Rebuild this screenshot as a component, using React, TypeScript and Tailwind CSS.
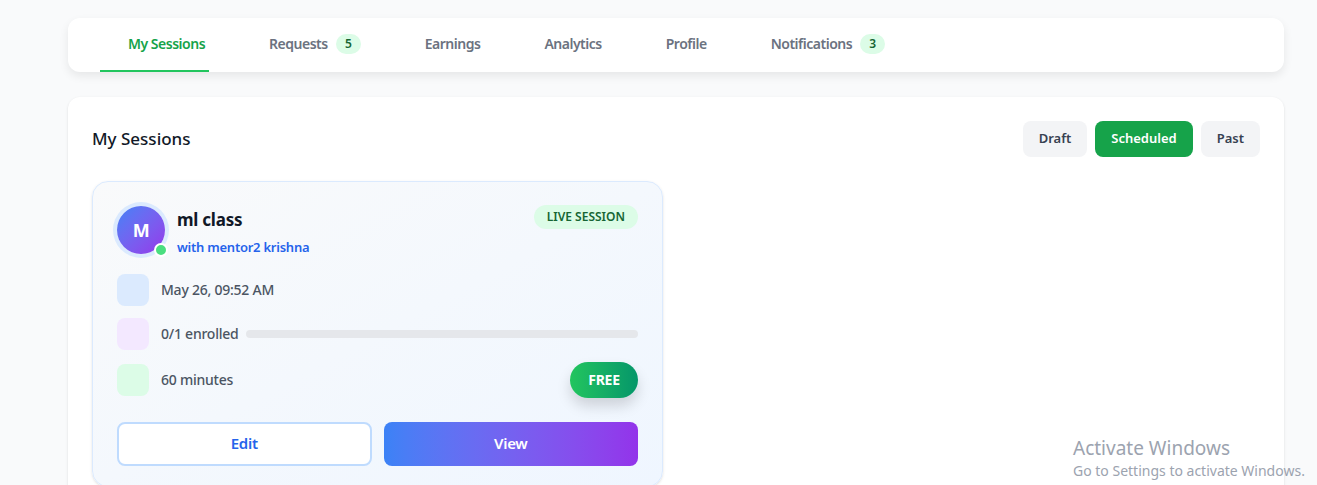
import React from 'react';

const tabs = [
    { label: 'My Sessions', active: true },
    { label: 'Requests', badge: 5 },
    { label: 'Earnings' },
    { label: 'Analytics' },
    { label: 'Profile' },
    { label: 'Notifications', badge: 3 },
];

function NavTabs() {
    return (
        <div className="flex h-[54px] items-center rounded-xl bg-white px-[60px] shadow-[0_4px_10px_rgba(0,0,0,0.08)]">
            <div className="flex h-full items-center gap-[64px]">
                {tabs.map((t) => (
                    <div key={t.label} className="relative flex h-full items-center gap-2 pb-[3px]">
                        <span className={`text-[14px] font-semibold tracking-[-0.035em] ${t.active ? 'text-[#16a34a]' : 'text-[#6b7280]'}`}>{t.label}</span>
                        {t.badge !== undefined && (
                            <span className="flex h-[20px] min-w-[25px] items-center justify-center rounded-full bg-[#dcfce7] px-2 text-[12px] font-semibold text-[#166534]">
                                {t.badge}
                            </span>
                        )}
                        {t.active && <span className="absolute bottom-0 left-[-28px] h-[2px] w-[109px] bg-[#22c55e]" />}
                    </div>
                ))}
            </div>
        </div>
    );
}

function InfoRow({ box, children, tall }: { box: string; children: React.ReactNode; tall?: boolean }) {
    return (
        <div className={`flex items-center gap-3 ${tall ? 'h-[36px]' : 'h-8'}`}>
            <div className={`h-8 w-8 shrink-0 rounded-lg ${box}`} />
            {children}
        </div>
    );
}

function SessionCard() {
    return (
        <div className="w-[571px] rounded-2xl border border-[#dbeafe] bg-gradient-to-br from-[#f9fafb] to-[#eff6ff] px-6 pt-6 pb-5 shadow-sm">
            <div className="flex items-start justify-between">
                <div className="flex items-start gap-3">
                    <div className="relative">
                        <div className="flex h-12 w-12 items-center justify-center rounded-full bg-gradient-to-br from-[#3b82f6] to-[#9333ea] text-[18px] font-bold text-white ring-4 ring-[#dbeafe]">
                            M
                        </div>
                        <span className="absolute right-[-3px] bottom-[-3px] h-[14px] w-[14px] rounded-full border-2 border-white bg-[#4ade80]" />
                    </div>
                    <div className="pt-[2px]">
                        <div className="text-[17px] leading-[24px] font-bold text-[#111827]">ml class</div>
                        <div className="mt-[6px] text-[13px] font-semibold text-[#2563eb]">with mentor2 krishna</div>
                    </div>
                </div>
                <span className="mt-[-1px] rounded-full bg-[#dcfce7] px-[13px] py-[5px] text-[12px] leading-[14px] font-semibold tracking-normal text-[#166534]">LIVE SESSION</span>
            </div>

            <div className="mt-4 flex flex-col gap-3">
                <InfoRow box="bg-[#dbeafe]">
                    <span className="text-[14px] font-medium text-[#4b5563]">May 26, 09:52 AM</span>
                </InfoRow>
                <InfoRow box="bg-[#f3e8ff]">
                    <span className="text-[14px] font-medium text-[#4b5563]">0/1 enrolled</span>
                    <div className="ml-[-4px] h-[8px] flex-1 rounded-full bg-[#e5e7eb]" />
                </InfoRow>
                <InfoRow box="bg-[#dcfce7]" tall>
                    <span className="flex-1 text-[14px] font-medium text-[#4b5563]">60 minutes</span>
                    <span className="flex h-[36px] w-[68px] items-center justify-center rounded-full bg-gradient-to-r from-[#22c55e] to-[#059669] text-[14px] font-bold text-white shadow-[0_8px_14px_rgba(0,0,0,0.15)]">
                        FREE
                    </span>
                </InfoRow>
            </div>

            <div className="mt-6 grid grid-cols-2 gap-3">
                <button className="h-[44px] rounded-lg border-2 border-[#bfdbfe] bg-white text-[15px] font-semibold text-[#2563eb]">Edit</button>
                <button className="h-[44px] rounded-lg bg-gradient-to-r from-[#3b82f6] to-[#9333ea] text-[15px] font-semibold text-white">View</button>
            </div>
        </div>
    );
}

export default function App() {
    return (
        <div className="relative h-[485px] overflow-hidden bg-[#f9fafb] pt-[18px] pr-[33px] pl-[68px] font-['Noto_Sans',sans-serif] tracking-[-0.015em]">
            <NavTabs />
            <div className="mt-[25px] h-[420px] rounded-xl bg-white p-6 shadow-sm">
                <div className="flex items-center justify-between">
                    <h2 className="text-[17px] font-medium tracking-normal text-[#111827]">My Sessions</h2>
                    <div className="flex gap-2 tracking-normal">
                        <button className="h-9 rounded-lg bg-[#f3f4f6] px-4 text-[13px] font-semibold text-[#374151]">Draft</button>
                        <button className="h-9 rounded-lg bg-[#16a34a] px-4 text-[13px] font-semibold text-white">Scheduled</button>
                        <button className="h-9 rounded-lg bg-[#f3f4f6] px-4 text-[13px] font-semibold text-[#374151]">Past</button>
                    </div>
                </div>
                <div className="mt-6">
                    <SessionCard />
                </div>
            </div>
            <div className="pointer-events-none absolute top-[436px] left-[1073px] tracking-normal text-[#9ca3af]">
                <div className="text-[19px] leading-[24px]">Activate Windows</div>
                <div className="text-[14px] leading-[22px]">Go to Settings to activate Windows.</div>
            </div>
        </div>
    );
}
